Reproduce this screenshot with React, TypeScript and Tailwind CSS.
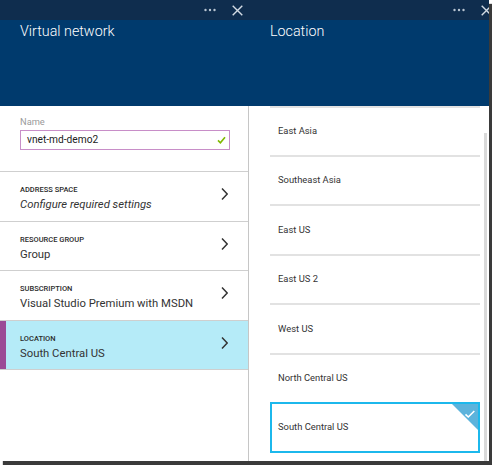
import React from "react";

function TopBar() {
  return (
    <div className="h-[20px] bg-[#0f2d4e] flex items-center justify-end pr-[6px] shrink-0">
      <svg width="12" height="4" viewBox="0 0 12 4" className="mr-[16px]">
        <circle cx="1.5" cy="2" r="1.2" fill="#b9c5d2" />
        <circle cx="6" cy="2" r="1.2" fill="#b9c5d2" />
        <circle cx="10.5" cy="2" r="1.2" fill="#b9c5d2" />
      </svg>
      <svg width="11" height="11" viewBox="0 0 11 11">
        <path d="M0.7 0.7 L10.3 10.3 M10.3 0.7 L0.7 10.3" stroke="#d3dbe4" strokeWidth="1.4" fill="none" />
      </svg>
    </div>
  );
}

function Chevron() {
  return (
    <svg width="7" height="12" viewBox="0 0 7 12" className="mt-[3px] shrink-0">
      <polyline points="1,0.6 6.2,6 1,11.4" fill="none" stroke="#333" strokeWidth="1.5" />
    </svg>
  );
}

function Row({
  label,
  value,
  italic,
  heightClass,
  selected,
}: {
  label: string;
  value: string;
  italic?: boolean;
  heightClass: string;
  selected?: boolean;
}) {
  return (
    <div
      className={
        "flex border-b border-[#cfcfcf] shrink-0 " +
        heightClass +
        (selected ? " bg-[#b5ebf8]" : " bg-white")
      }
    >
      <div className={"w-[6px] shrink-0 " + (selected ? "bg-[#9b4b96]" : "")} />
      <div className="flex-1 flex items-start pl-[14px] pr-[20px] pt-[13px]">
        <div className="flex-1 flex flex-col">
          <div className="text-[7.5px] leading-[10px] font-medium text-[#2b2b2b] uppercase">{label}</div>
          <div
            className={
              "mt-[3px] text-[11.3px] leading-[14px] text-[#333] " + (italic ? "italic" : "")
            }
          >
            {value}
          </div>
        </div>
        <Chevron />
      </div>
    </div>
  );
}

export default function App() {
  const items: { name: string; h: string }[] = [
    { name: "East Asia", h: "h-[49px]" },
    { name: "Southeast Asia", h: "h-[49px]" },
    { name: "East US", h: "h-[50px]" },
    { name: "East US 2", h: "h-[49px]" },
    { name: "West US", h: "h-[50px]" },
    { name: "North Central US", h: "h-[49px]" },
  ];
  return (
    <div className="w-[492px] h-[465px] bg-white font-['Roboto','Liberation_Sans',sans-serif]">
      <div className="w-[489px] h-[461px] overflow-hidden flex bg-white shadow-[3px_4px_1px_#3a3a3a]">
        {/* Left blade */}
        <div className="w-[249px] shrink-0 flex flex-col">
          <div className="h-[106px] bg-[#003a6d] flex flex-col shrink-0">
            <TopBar />
            <div className="pl-[20px] pt-px text-[14.3px] leading-[20px] font-light text-white">
              Virtual network
            </div>
          </div>
          <div className="flex-1 flex flex-col border-r border-[#c6c6c6]">
            <div className="px-[20px] pt-[10px] pb-[21px] border-b border-[#cfcfcf] shrink-0">
              <div className="text-[9.3px] leading-[12px] text-[#9a9a9a]">Name</div>
              <div className="mt-[2px] h-[20px] w-[210px] border border-[#c88ec8] flex items-center justify-between pl-[6px] pr-[3px]">
                <span className="text-[10.2px] leading-[12px] text-[#222]">vnet-md-demo2</span>
                <svg width="9" height="8" viewBox="0 0 9 8">
                  <path d="M1 4.4 L3.4 6.8 L8 1.2" fill="none" stroke="#7fba00" strokeWidth="1.6" />
                </svg>
              </div>
            </div>
            <Row label="Address space" value="Configure required settings" italic heightClass="h-[50px]" />
            <Row label="Resource group" value="Group" heightClass="h-[49px]" />
            <Row label="Subscription" value="Visual Studio Premium with MSDN" heightClass="h-[50px]" />
            <Row label="Location" value="South Central US" heightClass="h-[49px]" selected />
          </div>
        </div>

        {/* Right blade */}
        <div className="w-[249px] shrink-0 flex flex-col">
          <div className="h-[106px] bg-[#003a6d] flex flex-col shrink-0">
            <TopBar />
            <div className="pl-[21px] pt-px text-[14.3px] leading-[20px] font-light text-white">
              Location
            </div>
          </div>
          <div className="flex-1 relative bg-white">
            <div className="ml-[21px] w-[210px] flex flex-col">
              {items.map((it) => (
                <div
                  key={it.name}
                  className={
                    "border-t-2 border-[#e2e2e2] flex items-center pl-[8px] text-[9.4px] text-[#333] " + it.h
                  }
                >
                  {it.name}
                </div>
              ))}
              <div className="h-[51px] border-2 border-[#1cb8ec] relative flex items-center pl-[6px] text-[9.4px] text-[#333]">
                South Central US
                <svg width="26" height="26" viewBox="0 0 26 26" className="absolute top-0 right-0">
                  <polygon points="0,0 26,0 26,26" fill="#5cb3dc" />
                  <path d="M13.5 10.3 L16.3 13 L22.3 7" fill="none" stroke="#ffffff" strokeWidth="1.6" />
                </svg>
              </div>
            </div>
            <div className="absolute left-[235px] top-[27px] bottom-0 w-[3px] bg-[#d9d9d9]" />
          </div>
        </div>
      </div>
    </div>
  );
}
